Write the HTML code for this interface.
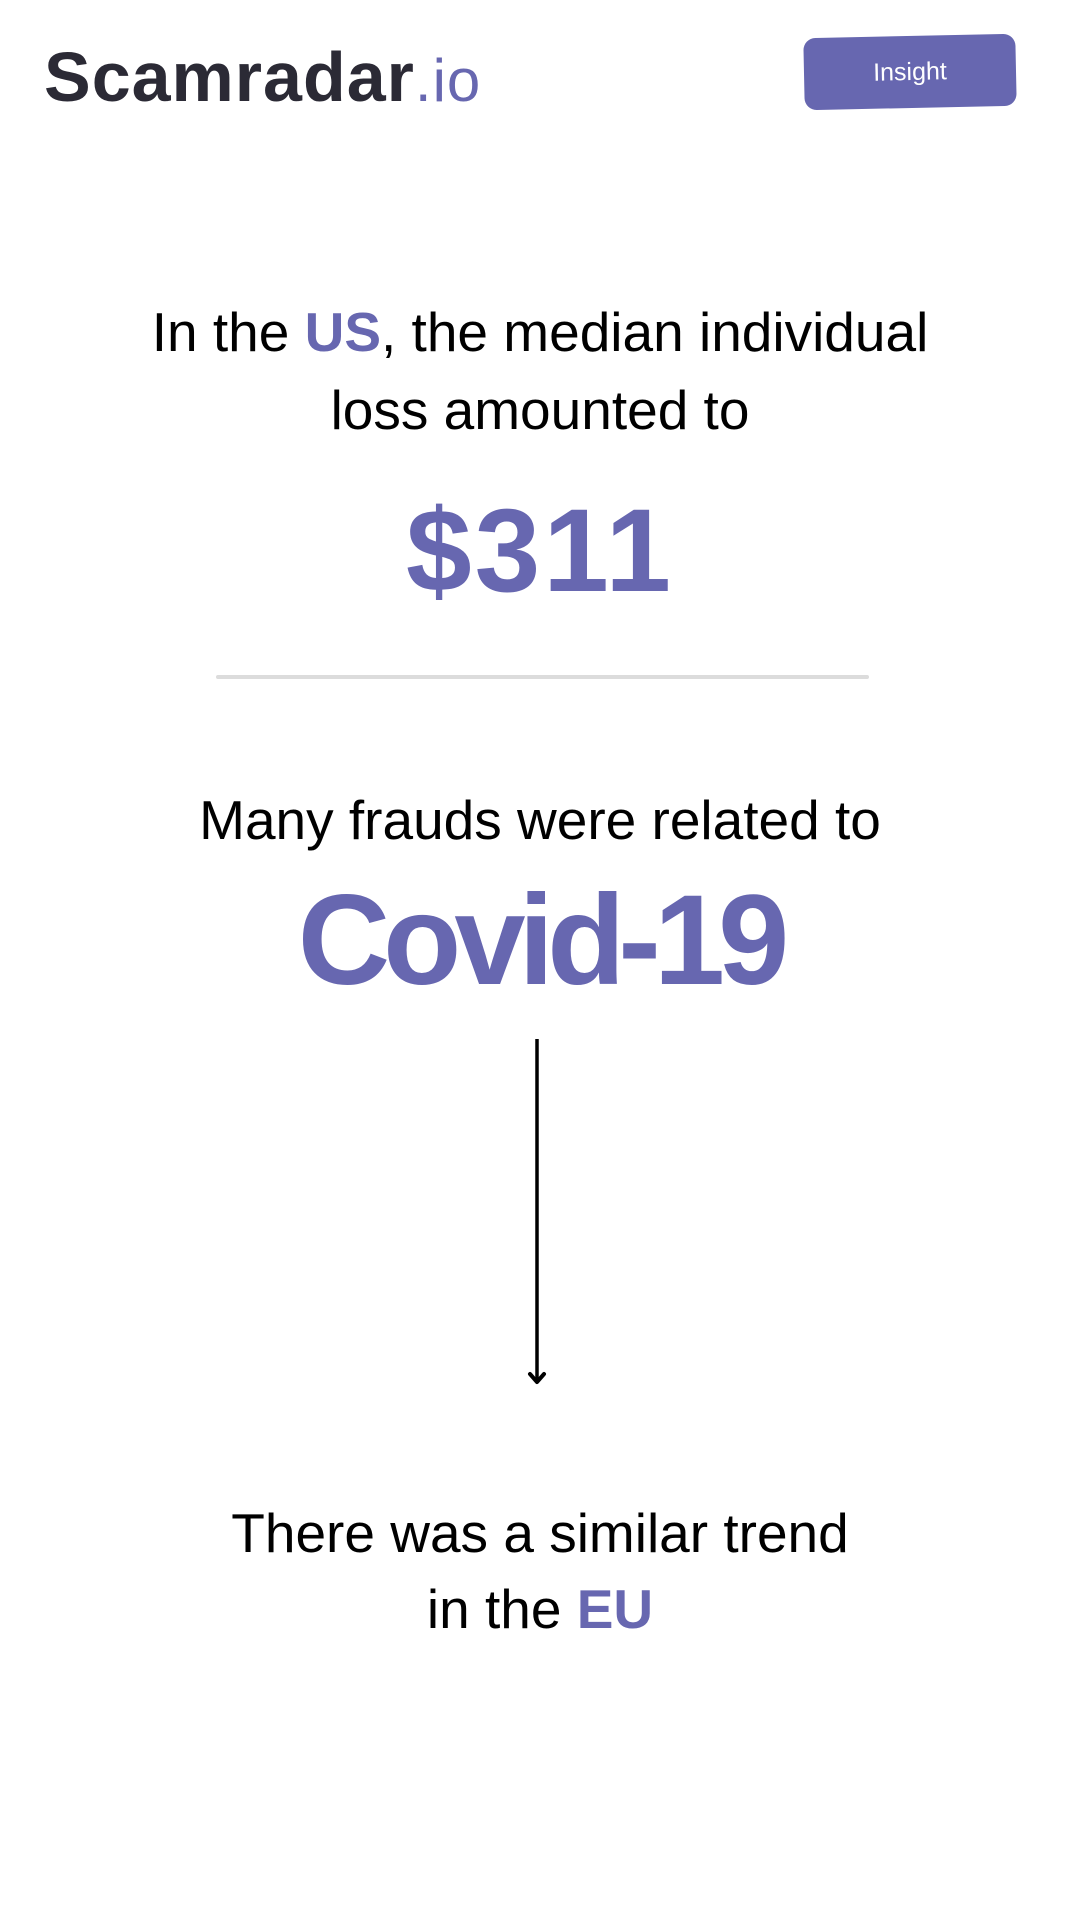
<!DOCTYPE html>
<html><head><meta charset="utf-8"><style>
html,body{margin:0;padding:0;background:#fff;width:1080px;height:1920px;overflow:hidden;position:relative;font-family:"Liberation Sans",Arial,sans-serif;}
.t{position:absolute;left:0;width:1080px;text-align:center;line-height:1;white-space:nowrap;color:#000;}
.p{color:#6767b0;font-weight:bold;}
.body{font-size:55px;letter-spacing:0px;}
</style></head><body>
<div style="position:absolute;left:44px;top:42px;font-size:70px;line-height:1;font-weight:bold;color:#2b2a35;letter-spacing:1px;white-space:nowrap;">Scamradar<span style="color:#6767b0;font-weight:normal;font-size:60px;letter-spacing:1px;">.io</span></div>
<div style="position:absolute;left:804px;top:36px;width:212px;height:72px;background:#6767b0;border-radius:12px;transform:rotate(-1.2deg);color:#fff;font-size:25px;line-height:72px;text-align:center;">Insight</div>

<div class="t body" style="top:305px;">In the <span class="p">US</span>, the median individual</div>
<div class="t body" style="top:383px;">loss amounted to</div>
<div class="t p" style="top:492px;font-size:118px;letter-spacing:3px;">$311</div>
<div style="position:absolute;left:216px;top:675px;width:653px;height:4px;background:#dcdcdc;border-radius:2px;"></div>

<div class="t body" style="top:793px;">Many frauds were related to</div>
<div class="t p" style="top:877px;font-size:128px;letter-spacing:-7px;">Covid-19</div>

<svg style="position:absolute;left:0;top:0" width="1080" height="1920">
<line x1="537" y1="1039" x2="537" y2="1380" stroke="#000" stroke-width="3.5"/>
<path d="M530 1374 L537 1382 L544 1374" fill="none" stroke="#000" stroke-width="4" stroke-linejoin="round" stroke-linecap="round"/>
</svg>

<div class="t body" style="top:1506px;">There was a similar trend</div>
<div class="t body" style="top:1582px;">in the <span class="p">EU</span></div>
</body></html>
